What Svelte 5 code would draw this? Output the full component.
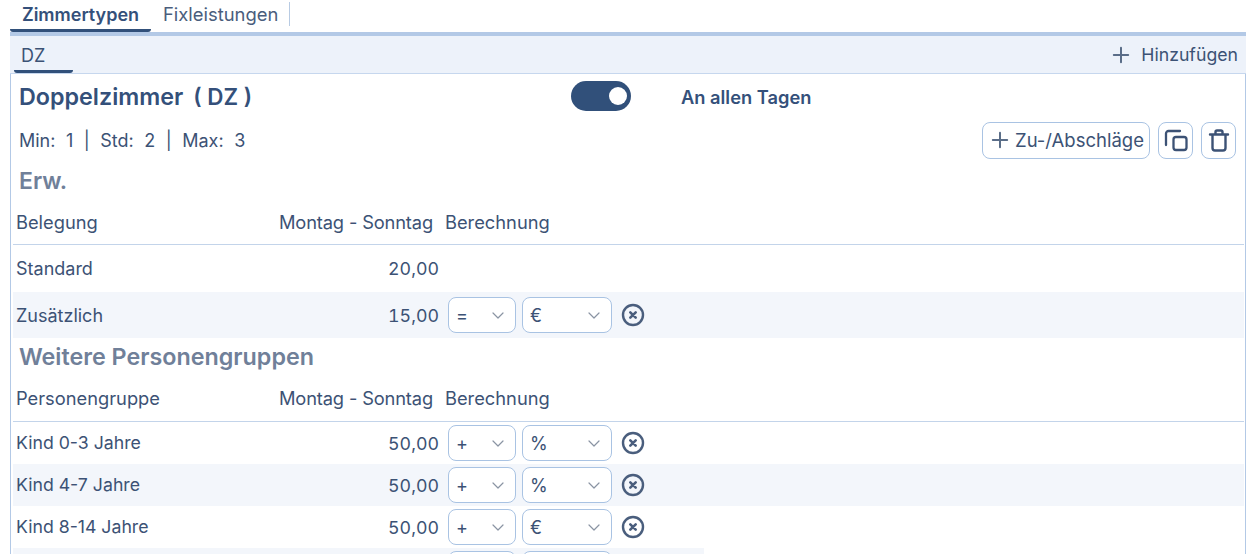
<script lang="ts">
	const adults = [
		{ name: 'Standard', price: '20,00', op: null, unit: null },
		{ name: 'Zusätzlich', price: '15,00', op: '=', unit: '€' }
	];
	const groups = [
		{ name: 'Kind 0-3 Jahre', price: '50,00', op: '+', unit: '%' },
		{ name: 'Kind 4-7 Jahre', price: '50,00', op: '+', unit: '%' },
		{ name: 'Kind 8-14 Jahre', price: '50,00', op: '+', unit: '€' }
	];
</script>

{#snippet plus(size)}
	<svg class="plus" width={size} height={size} viewBox="0 0 20 20" fill="none" stroke="currentColor" stroke-width="2.2" stroke-linecap="round">
		<path d="M10 2v16M2 10h16" />
	</svg>
{/snippet}

{#snippet chevron()}
	<svg class="chevron" width="12" height="7" viewBox="0 0 12 7" fill="none" stroke="#8a94a3" stroke-width="1.2" stroke-linecap="round" stroke-linejoin="round">
		<path d="M1 1l5 5 5-5" />
	</svg>
{/snippet}

{#snippet calc(op, unit)}
	<div class="calc">
		<div class="select op"><span>{op}</span>{@render chevron()}</div>
		<div class="select unit"><span>{unit}</span>{@render chevron()}</div>
		<svg class="remove" width="24" height="24" viewBox="0 0 24 24" fill="none" stroke="#4a5e7d" stroke-linecap="round">
			<circle cx="12" cy="12" r="10" stroke-width="2.4" />
			<path d="M9.300 9.300l5.400 5.400M14.700 9.300l-5.400 5.400" stroke-width="2.600" />
		</svg>
	</div>
{/snippet}

<div class="page">
	<nav class="tabs">
		<button class="tab active">Zimmertypen</button>
		<button class="tab">Fixleistungen</button>
	</nav>

	<div class="panel">
		<div class="subbar">
			<span class="subtab">DZ</span>
			<span class="add">{@render plus(18)}Hinzufügen</span>
		</div>

		<div class="card">
			<div class="title-row">
				<h1>Doppelzimmer<span class="code">( DZ )</span></h1>
				<span class="toggle"><i></i></span>
				<strong>An allen Tagen</strong>
			</div>

			<div class="meta-row">
				<div class="meta">
					<span>Min:</span><span>1</span><span>|</span><span>Std:</span><span>2</span><span>|</span><span>Max:</span><span>3</span>
				</div>
				<div class="actions">
					<button class="btn wide">{@render plus(18)}Zu-/Abschläge</button>
					<button class="btn icon" aria-label="Kopieren">
						<svg width="24" height="24" viewBox="0 0 24 24" fill="none" stroke="currentColor" stroke-width="2.3" stroke-linejoin="round" stroke-linecap="round">
							<rect x="9.500" y="9" width="13" height="13" rx="2.500" />
							<path d="M2 17V5.500A2.500 2.500 0 0 1 4.500 3H16" />
						</svg>
					</button>
					<button class="btn icon" aria-label="Löschen">
						<svg width="24" height="24" viewBox="0 0 24 24" fill="none" stroke="currentColor" stroke-width="2.4" stroke-linejoin="round" stroke-linecap="round">
							<path d="M3 6.500h18M5.500 6.500V20a2.500 2.500 0 0 0 2.500 2.500h8a2.500 2.500 0 0 0 2.500-2.500V6.500M8.500 6.500V4a1.500 1.500 0 0 1 1.500-1.500h4A1.500 1.500 0 0 1 15.500 4v2.500" />
						</svg>
					</button>
				</div>
			</div>

			<h2 class="erw">Erw.</h2>
			<div class="row head first">
				<span class="name">Belegung</span><span class="days">Montag - Sonntag</span><span class="calc-head">Berechnung</span>
			</div>
			<div class="row standard">
				<span class="name">{adults[0].name}</span><span class="price">{adults[0].price}</span>
			</div>
			<div class="row extra striped">
				<span class="name">{adults[1].name}</span><span class="price">{adults[1].price}</span>
				{@render calc(adults[1].op, adults[1].unit)}
			</div>

			<h2 class="more">Weitere Personengruppen</h2>
			<div class="row head second">
				<span class="name">Personengruppe</span><span class="days">Montag - Sonntag</span><span class="calc-head">Berechnung</span>
			</div>
			{#each groups as g, i}
				<div class="row group" class:striped={i % 2 === 1}>
					<span class="name">{g.name}</span><span class="price">{g.price}</span>
					{@render calc(g.op, g.unit)}
				</div>
			{/each}
			<div class="row group partial">
				<div class="calc">
					<div class="select op"></div>
					<div class="select unit"></div>
				</div>
			</div>
		</div>
	</div>
</div>

<style>
	:global(body) {
		margin: 0;
		background: #fff;
		overflow: hidden;
	}

	.page {
		height: 554px;
		overflow: hidden;
		font-family: Inter, 'Noto Sans', sans-serif;
		font-size: 18px;
		color: #3c5275;
	}

	.tabs {
		display: flex;
		height: 32px;
		padding-left: 10px;
		align-items: flex-start;
	}

	.tab {
		background: none;
		border: 0;
		font: inherit;
		color: #4a5d7c;
		padding: 0 11px 0 12px;
		height: 24px;
		margin-top: 2px;
		font-size: 18.400px;
		line-height: 25px;
	}

	.tab.active {
		height: 30px;
		font-weight: 600;
		color: #34507a;
		font-size: 18px;
		padding: 0 0 3px;
		border-bottom: 3px solid #31507a;
		border-radius: 0 0 3px 3px;
		box-sizing: border-box;
		width: 141px;
	}

	.tab:not(.active) {
		border-right: 1px solid #b8cbe3;
	}

	.panel {
		margin-left: 10px;
		width: 1236px;
		border-top: 4px solid #b3c9e6;
	}

	.subbar {
		display: flex;
		justify-content: space-between;
		align-items: flex-start;
		height: 38px;
		background: #edf2fa;
		box-sizing: border-box;
		border-bottom: 1px solid #c6d7ee;
		padding-right: 8px;
	}

	.subtab {
		margin-left: 4px;
		width: 59px;
		height: 37px;
		box-sizing: border-box;
		border-bottom: 3px solid #31507a;
		border-radius: 0 0 3px 3px;
		padding: 7px 0 0 7px;
		line-height: 25px;
		font-size: 18px;
	}

	.add {
		display: flex;
		align-items: center;
		gap: 11px;
		height: 37px;
		line-height: 37px;
		font-size: 17.700px;
	}

	.plus {
		color: #5a6d88;
		flex: none;
	}

	.card {
		border-left: 1px solid #b3c9e6;
		border-right: 1px solid #b3c9e6;
		height: 480px;
		box-sizing: border-box;
	}

	.title-row {
		height: 45px;
		display: flex;
		align-items: center;
		padding-left: 8px;
	}

	h1 {
		margin: 0;
		font-size: 23.300px;
		font-weight: 600;
		color: #34507a;
		width: 552px;
		white-space: nowrap;
	}

	.code {
		margin-left: 10px;
		font-size: 22.400px;
	}

	.toggle {
		width: 60px;
		height: 30px;
		margin-top: -1px;
		background: #31507a;
		border-radius: 15px;
		display: flex;
		align-items: center;
		justify-content: flex-end;
		padding-right: 4px;
		box-sizing: border-box;
	}

	.toggle i {
		display: block;
		width: 18px;
		height: 18px;
		border-radius: 50%;
		background: #fff;
	}

	strong {
		margin-left: 50px;
		font-size: 18.300px;
		font-weight: 600;
		color: #34507a;
	}

	.meta-row {
		display: flex;
		justify-content: space-between;
		align-items: center;
		height: 42px;
		padding: 0 9px 0 8px;
	}

	.meta {
		display: flex;
		gap: 10.500px;
		font-size: 18px;
	}

	.actions {
		display: flex;
		gap: 8px;
	}

	.btn {
		display: flex;
		align-items: center;
		gap: 6px;
		height: 37px;
		box-sizing: border-box;
		background: #fff;
		border: 1px solid #a9c3e3;
		border-radius: 8px;
		font: inherit;
		font-size: 18.500px;
		color: #3c5275;
		padding: 0 5px 0 8px;
	}

	.btn.wide {
		width: 168px;
	}

	.btn.icon {
		width: 35px;
		padding: 0;
		justify-content: center;
	}

	h2 {
		margin: 0;
		font-weight: 600;
		color: #708099;
		padding-left: 8px;
	}

	.erw {
		font-size: 23px;
		height: 34px;
		line-height: 30px;
		margin-top: 5px;
	}

	.more {
		font-size: 23.300px;
		height: 38px;
		line-height: 38px;
	}

	.row {
		display: flex;
		align-items: center;
		padding-left: 3px;
		margin-left: 2px;
		width: 1231px;
		box-sizing: border-box;
	}

	.row .name {
		width: 263px;
		flex: none;
	}

	.head span {
		line-height: 22px;
		font-size: 18.300px;
	}

	.head {
		border-bottom: 1px solid #c3d4ea;
	}

	.head.first {
		height: 45px;
	}

	.head.second {
		height: 46px;
		padding-bottom: 1px;
	}

	.days {
		width: 166px;
		flex: none;
		letter-spacing: -0.150px;
	}

	.price {
		width: 160px;
		text-align: right;
		flex: none;
		font-variant-numeric: tabular-nums;
		font-size: 17.800px;
	}

	.standard {
		height: 47px;
	}

	.extra {
		height: 46px;
	}

	.group {
		height: 42px;
	}

	.group .name {
		padding-bottom: 2px;
		font-size: 17.700px;
	}

	.striped {
		background: #f3f6fb;
	}

	.partial {
		background: linear-gradient(to right, #f3f6fb 691px, #fff 691px);
		align-items: flex-start;
		padding-top: 3px;
	}

	.calc {
		display: flex;
		align-items: center;
		gap: 6px;
		margin-left: 9px;
	}

	.partial .calc {
		margin-left: 432px;
	}

	.select {
		display: flex;
		align-items: center;
		justify-content: space-between;
		height: 36px;
		box-sizing: border-box;
		background: #fff;
		border: 1px solid #a9c3e3;
		border-radius: 8px;
		padding: 0 11px 0 7px;
		font-size: 18px;
	}

	.select.op {
		width: 68px;
	}

	.select.unit {
		width: 90px;
	}

	.remove {
		margin-left: 3px;
	}
</style>
